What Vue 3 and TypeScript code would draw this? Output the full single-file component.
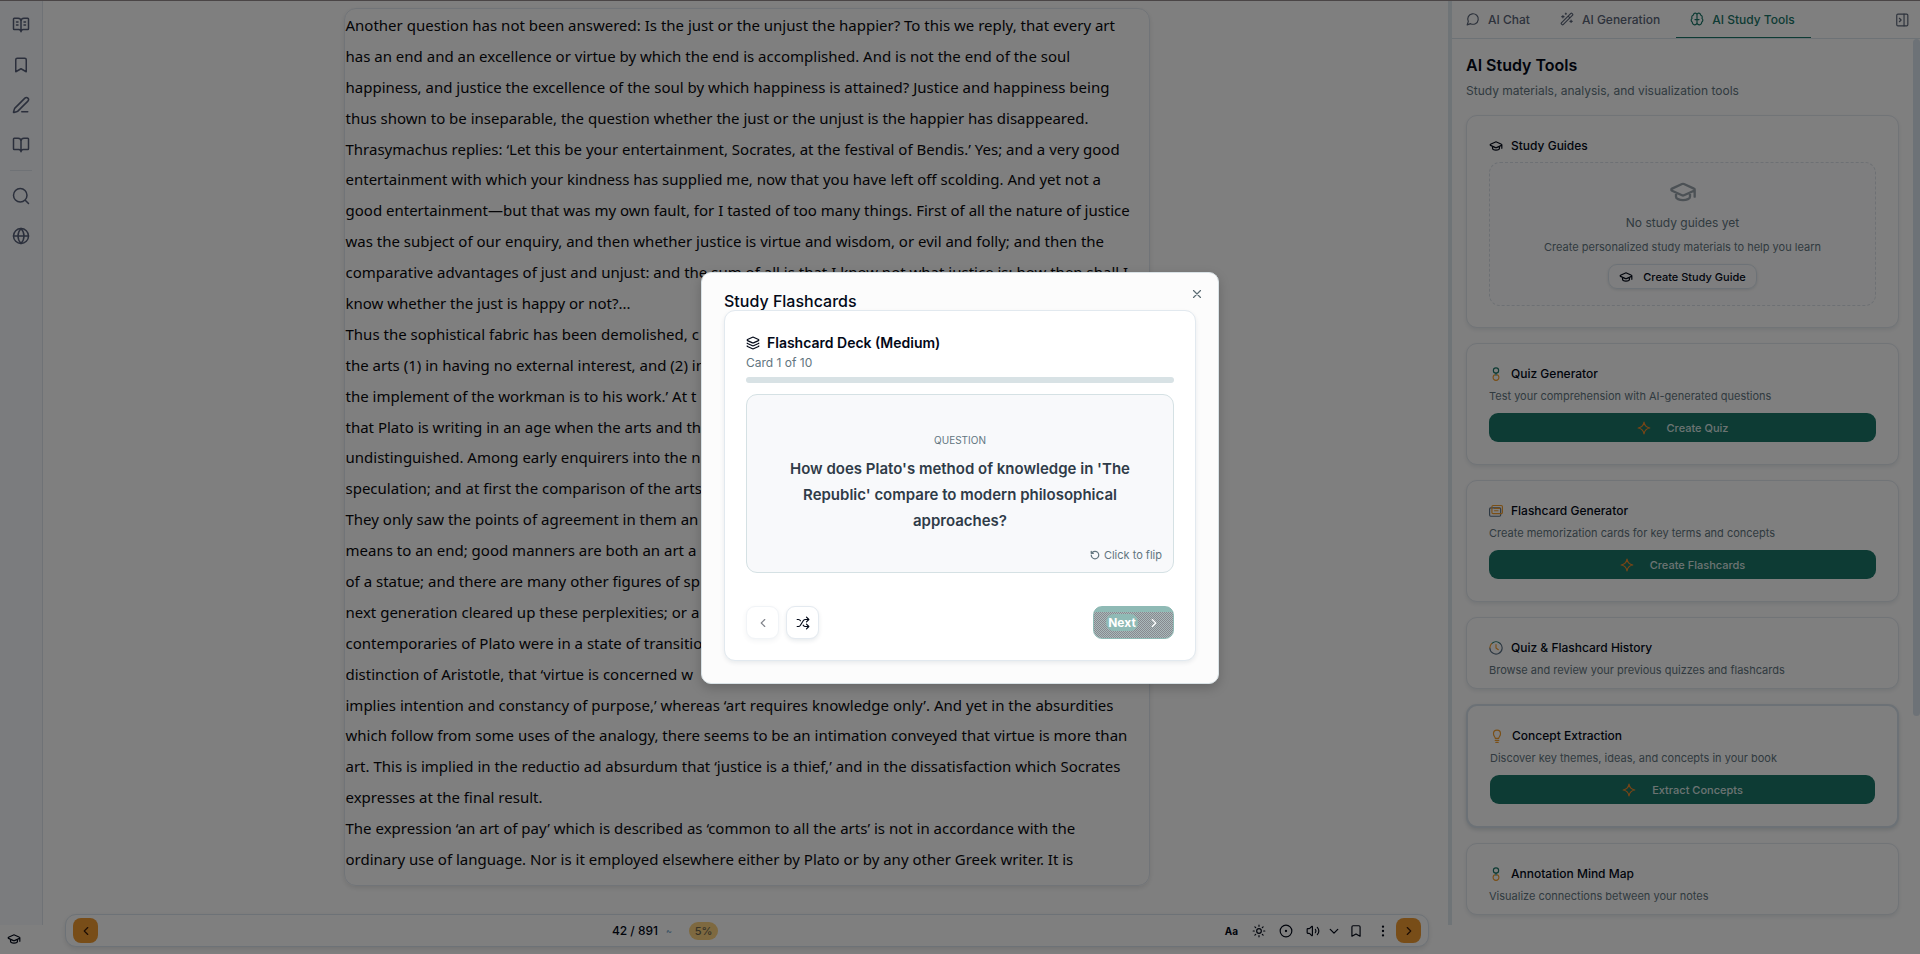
<script setup lang="ts">
import { ref } from 'vue'

const icons: Record<string, string> = {
  bookText: '<path d="M12 7v14M3 18a1 1 0 0 1-1-1V4a1 1 0 0 1 1-1h5a4 4 0 0 1 4 4 4 4 0 0 1 4-4h5a1 1 0 0 1 1 1v13a1 1 0 0 1-1 1h-6a3 3 0 0 0-3 3 3 3 0 0 0-3-3zM16 12h2M16 8h2M6 12h2M6 8h2"/>',
  bookmark: '<path d="m19 21-7-4-7 4V5a2 2 0 0 1 2-2h10a2 2 0 0 1 2 2z"/>',
  pen: '<path d="M13 21h8M21.174 6.812a1 1 0 0 0-3.986-3.987L3.842 16.174a2 2 0 0 0-.5.83l-1.321 4.352a.5.5 0 0 0 .623.622l4.353-1.32a2 2 0 0 0 .83-.497z"/>',
  book: '<path d="M12 7v14M3 18a1 1 0 0 1-1-1V4a1 1 0 0 1 1-1h5a4 4 0 0 1 4 4 4 4 0 0 1 4-4h5a1 1 0 0 1 1 1v13a1 1 0 0 1-1 1h-6a3 3 0 0 0-3 3 3 3 0 0 0-3-3z"/>',
  search: '<circle cx="11" cy="11" r="9"/><path d="m22 22-4-4"/>',
  globe: '<circle cx="12" cy="12" r="10"/><path d="M12 2a14.5 14.5 0 0 0 0 20 14.5 14.5 0 0 0 0-20M2 12h20"/>',
  cap: '<path d="M21.42 10.922a1 1 0 0 0-.019-1.838L12.83 5.18a2 2 0 0 0-1.66 0L2.6 9.08a1 1 0 0 0 0 1.832l8.57 3.908a2 2 0 0 0 1.66 0zM22 10v6M6 12.5V16a6 3 0 0 0 12 0v-3.5"/>',
  chat: '<path d="M7.9 20A9 9 0 1 0 4 16.1L2 22z"/>',
  wand: '<path d="m21.64 3.64-1.28-1.28a1.21 1.21 0 0 0-1.72 0L2.36 18.64a1.21 1.21 0 0 0 0 1.72l1.28 1.28a1.2 1.2 0 0 0 1.72 0L21.64 5.36a1.2 1.2 0 0 0 0-1.72M14 7l3 3M5 6v4M19 14v4M10 2v2M7 8H3M21 16h-4M11 3H9"/>',
  brain: '<path d="M12 5a3 3 0 1 0-5.997.125 4 4 0 0 0-2.526 5.77 4 4 0 0 0 .556 6.588A4 4 0 1 0 12 18ZM12 5a3 3 0 1 1 5.997.125 4 4 0 0 1 2.526 5.77 4 4 0 0 1-.556 6.588A4 4 0 1 1 12 18ZM8.500 13h7M12 5v13"/>',
  panel: '<rect x="3" y="2" width="19" height="20" rx="2"/><path d="M15.500 2v20M7.500 9l3 3-3 3"/>',
  sun: '<circle cx="12" cy="12" r="4"/><path d="M12 2v2M12 20v2M4.930 4.930l1.410 1.410M17.660 17.660l1.410 1.410M2 12h2M20 12h2M6.340 17.660l-1.410 1.410M19.070 4.930l-1.410 1.410"/>',
  target: '<circle cx="12" cy="12" r="10"/><circle cx="12" cy="12" r="1"/>',
  volume: '<path d="M11 4.702a.7.7 0 0 0-1.203-.498L6.413 7.587A1.400 1.400 0 0 1 5.416 8H3a1 1 0 0 0-1 1v6a1 1 0 0 0 1 1h2.416a1.400 1.400 0 0 1 .997.413l3.383 3.384A.7.7 0 0 0 11 19.298zM16 9a5 5 0 0 1 0 6M19.364 18.364a9 9 0 0 0 0-12.728"/>',
  down: '<path d="m3 8 9 9 9-9"/>',
  left: '<path d="m15 18-6-6 6-6"/>',
  right: '<path d="m9 18 6-6-6-6"/>',
  dots: '<circle cx="12" cy="12" r="1"/><circle cx="12" cy="4.500" r="1"/><circle cx="12" cy="19.500" r="1"/>',
  close: '<path d="M18 6 6 18M6 6l12 12"/>',
  layers: '<path d="M12.830 2.180a2 2 0 0 0-1.660 0L2.600 6.080a1 1 0 0 0 0 1.830l8.580 3.910a2 2 0 0 0 1.660 0l8.580-3.900a1 1 0 0 0 0-1.830zM2 12a1 1 0 0 0 .58.910l8.600 3.910a2 2 0 0 0 1.650 0l8.580-3.900A1 1 0 0 0 22 12M2 17a1 1 0 0 0 .58.910l8.600 3.910a2 2 0 0 0 1.650 0l8.580-3.900A1 1 0 0 0 22 17"/>',
  flip: '<path d="M3 12a9 9 0 1 0 9-9 9.750 9.750 0 0 0-6.740 2.740L3 8M3 3v5h5"/>',
  shuffle: '<path d="m18 14 4 4-4 4M18 2l4 4-4 4M2 18h1.973a4 4 0 0 0 3.300-1.700l5.454-8.600a4 4 0 0 1 3.300-1.700H22M2 6h1.972a4 4 0 0 1 3.600 2.200M22 18h-6.041a4 4 0 0 1-3.300-1.800l-.359-.450"/>',
  star: '<path d="M12 2c1 6 4 9 10 10-6 1-9 4-10 10-1-6-4-9-10-10 6-1 9-4 10-10z"/>',
  quiz: '<g stroke="#1a7668"><circle cx="12" cy="6" r="4.500"/><path d="M12 10.500V14"/></g><path stroke="#f59e2c" d="M9.500 13.500a5 5 0 1 0 5 0"/>',
  cards: '<rect stroke="#5b7186" x="1" y="6.500" width="19" height="14.500" rx="2"/><rect stroke="#f59e2c" x="5" y="2.500" width="18" height="14" rx="2"/><path stroke="#f59e2c" d="M9.500 7.500h9M9.500 11.500h6"/>',
  history: '<path stroke="#1a7668" d="M5 4a10.500 10.500 0 0 1 14 0"/><path stroke="#5b7186" d="M19 4a10.500 10.500 0 1 1-17.500 8"/><path stroke="#f59e2c" d="M1.500 11.500a10 10 0 0 1 3-7M12 6v6l4 3"/>',
  bulb: '<path d="M9 16c0-2-3-4-3-8a6 6 0 0 1 12 0c0 4-3 6-3 8zM9 19.500h6M10 23h4"/>',
}

const sideIcons = ['bookText', 'bookmark', 'pen', 'book']
const sideLabels = ['Contents', 'Bookmarks', 'Notes', 'Library']
const tabs = [
  { icon: 'chat', label: 'AI Chat' },
  { icon: 'wand', label: 'AI Generation' },
  { icon: 'brain', label: 'AI Study Tools' },
]
const activeTab = ref(2)

const tools = [
  { icon: 'quiz', title: 'Quiz Generator', text: 'Test your comprehension with AI-generated questions', action: 'Create Quiz' },
  { icon: 'cards', title: 'Flashcard Generator', text: 'Create memorization cards for key terms and concepts', action: 'Create Flashcards' },
  { icon: 'history', title: 'Quiz & Flashcard History', text: 'Browse and review your previous quizzes and flashcards' },
  { icon: 'bulb', title: 'Concept Extraction', text: 'Discover key themes, ideas, and concepts in your book', action: 'Extract Concepts', strong: true },
  { icon: 'quiz', title: 'Annotation Mind Map', text: 'Visualize connections between your notes' },
]

const paragraphs = [
  [
    'Another question has not been answered: Is the just or the unjust the happier? To this we reply, that every art',
    'has an end and an excellence or virtue by which the end is accomplished. And is not the end of the soul',
    'happiness, and justice the excellence of the soul by which happiness is attained? Justice and happiness being',
    'thus shown to be inseparable, the question whether the just or the unjust is the happier has disappeared.',
  ],
  [
    'Thrasymachus replies: ‘Let this be your entertainment, Socrates, at the festival of Bendis.’ Yes; and a very good',
    'entertainment with which your kindness has supplied me, now that you have left off scolding. And yet not a',
    'good entertainment—but that was my own fault, for I tasted of too many things. First of all the nature of justice',
    'was the subject of our enquiry, and then whether justice is virtue and wisdom, or evil and folly; and then the',
    'comparative advantages of just and unjust: and the sum of all is that I know not what justice is; how then shall I',
    'know whether the just is happy or not?...',
  ],
  [
    'Thus the sophistical fabric has been demolished, c',
    'the arts (1) in having no external interest, and (2) in',
    'the implement of the workman is to his work.’ At t',
    'that Plato is writing in an age when the arts and th',
    'undistinguished. Among early enquirers into the n',
    'speculation; and at first the comparison of the arts',
    'They only saw the points of agreement in them an',
    'means to an end; good manners are both an art a',
    'of a statue; and there are many other figures of sp',
    'next generation cleared up these perplexities; or a',
    'contemporaries of Plato were in a state of transitio',
    'distinction of Aristotle, that ‘virtue is concerned w',
    'implies intention and constancy of purpose,’ whereas ‘art requires knowledge only’. And yet in the absurdities',
    'which follow from some uses of the analogy, there seems to be an intimation conveyed that virtue is more than',
    'art. This is implied in the reductio ad absurdum that ‘justice is a thief,’ and in the dissatisfaction which Socrates',
    'expresses at the final result.',
  ],
  [
    'The expression ‘an art of pay’ which is described as ‘common to all the arts’ is not in accordance with the',
    'ordinary use of language. Nor is it employed elsewhere either by Plato or by any other Greek writer. It is',
  ],
]
</script>

<template>
  <div class="app">
    <div class="workspace">
      <nav class="rail" aria-label="Reader tools">
        <button v-for="(name, i) in sideIcons" :key="name" class="rail-btn" :aria-label="sideLabels[i]">
          <svg class="ico i18" viewBox="0 0 24 24" v-html="icons[name]" />
        </button>
        <span class="rail-sep" />
        <button class="rail-btn" aria-label="Search"><svg class="ico i18" viewBox="0 0 24 24" v-html="icons.search" /></button>
        <button class="rail-btn" aria-label="Web"><svg class="ico i18" viewBox="0 0 24 24" v-html="icons.globe" /></button>
      </nav>

      <main class="reader">
        <article class="sheet">
          <p v-for="(lines, i) in paragraphs" :key="i">
            <span v-for="line in lines" :key="line">{{ line }}</span>
          </p>
        </article>
      </main>

      <aside class="panel">
        <div class="tabs">
          <button v-for="(tab, i) in tabs" :key="tab.label" class="tab" :class="{ active: i === activeTab }" @click="activeTab = i">
            <svg class="ico i14" viewBox="0 0 24 24" v-html="icons[tab.icon]" />{{ tab.label }}
          </button>
          <button class="collapse" aria-label="Collapse panel"><svg class="ico i14" viewBox="0 0 24 24" v-html="icons.panel" /></button>
        </div>
        <div class="panel-body">
          <div class="tools">
            <h1>AI Study Tools</h1>
            <p class="lead">Study materials, analysis, and visualization tools</p>
            <section class="card guides">
              <h2><svg class="ico i14" viewBox="0 0 24 24" v-html="icons.cap" />Study Guides</h2>
              <div class="empty">
                <svg class="ico i28" viewBox="0 0 24 24" v-html="icons.cap" />
                <p class="empty-title">No study guides yet</p>
                <p class="small">Create personalized study materials to help you learn</p>
                <button class="outline"><svg class="ico i14" viewBox="0 0 24 24" v-html="icons.cap" />Create Study Guide</button>
              </div>
            </section>
            <section v-for="tool in tools" :key="tool.title" class="card" :class="{ strong: tool.strong, short: !tool.action }">
              <h2><svg class="ico i14" :class="tool.icon" viewBox="0 0 24 24" v-html="icons[tool.icon]" />{{ tool.title }}</h2>
              <p class="small">{{ tool.text }}</p>
              <button v-if="tool.action" class="primary">
                <svg class="ico i14" viewBox="0 0 24 24" v-html="icons.star" />{{ tool.action }}
              </button>
            </section>
          </div>
          <div class="scroll"><span /></div>
        </div>
      </aside>
    </div>

    <button class="corner" aria-label="Study"><svg class="ico i14" viewBox="0 0 24 24" v-html="icons.cap" /></button>

    <footer class="bar">
      <button class="turn" aria-label="Previous page"><svg class="ico i14" viewBox="0 0 24 24" v-html="icons.left" /></button>
      <div class="place"><span>42 / 891</span><i>~</i><b>5%</b></div>
      <div class="controls">
        <button class="aa">Aa</button>
        <button aria-label="Theme"><svg class="ico i14" viewBox="0 0 24 24" v-html="icons.sun" /></button>
        <button aria-label="Focus"><svg class="ico i14" viewBox="0 0 24 24" v-html="icons.target" /></button>
        <button aria-label="Read aloud"><svg class="ico i14" viewBox="0 0 24 24" v-html="icons.volume" /></button>
        <button class="narrow" aria-label="Voice options"><svg class="ico i10" viewBox="0 0 24 24" v-html="icons.down" /></button>
        <button aria-label="Bookmark"><svg class="ico i14" viewBox="0 0 24 24" v-html="icons.bookmark" /></button>
        <button aria-label="More"><svg class="ico i14" viewBox="0 0 24 24" v-html="icons.dots" /></button>
        <button class="turn" aria-label="Next page"><svg class="ico i14" viewBox="0 0 24 24" v-html="icons.right" /></button>
      </div>
    </footer>

    <div class="overlay">
      <div class="dialog" role="dialog" aria-modal="true" aria-labelledby="dialog-title">
        <h2 id="dialog-title">Study Flashcards</h2>
        <button class="close" aria-label="Close"><svg class="ico i14" viewBox="0 0 24 24" v-html="icons.close" /></button>
        <div class="deck">
          <h3><svg class="ico i14" viewBox="0 0 24 24" v-html="icons.layers" />Flashcard Deck (Medium)</h3>
          <p class="count">Card 1 of 10</p>
          <div class="progress" role="progressbar" aria-label="Deck progress" aria-valuenow="0" aria-valuemin="0" aria-valuemax="10" />
          <button class="flash">
            <span class="kind">QUESTION</span>
            <span class="question">How does Plato's method of knowledge in 'The Republic' compare to modern philosophical approaches?</span>
            <span class="flip"><svg class="ico i10" viewBox="0 0 24 24" v-html="icons.flip" />Click to flip</span>
          </button>
          <div class="actions">
            <button class="square" disabled aria-label="Previous card"><svg class="ico i14" viewBox="0 0 24 24" v-html="icons.left" /></button>
            <button class="square" aria-label="Shuffle"><svg class="ico i14" viewBox="0 0 24 24" v-html="icons.shuffle" /></button>
            <button class="next"><span>Next</span><svg class="ico i14" viewBox="0 0 24 24" v-html="icons.right" /></button>
          </div>
        </div>
      </div>
    </div>
  </div>
</template>

<style>
html, body { height: 100%; overflow: hidden; }
#app { height: 100%; }
</style>

<style scoped>
.app {
  height: 100vh;
  position: relative;
  overflow: hidden;
  background: #fff;
  color: #020817;
  font-family: Inter, "Liberation Sans", sans-serif;
  font-size: 12px;
}
* { box-sizing: border-box; }
h1, h2, h3, p { margin: 0; }
button { font: inherit; color: inherit; background: none; border: 0; padding: 0; display: flex; align-items: center; justify-content: center; }
.ico { fill: none; stroke: currentColor; stroke-width: 2; stroke-linecap: round; stroke-linejoin: round; flex: none; }
.i10 { width: 10px; height: 10px; stroke-width: 3; }
.i14 { width: 14px; height: 14px; }
.i18 { width: 18px; height: 18px; }
.i28 { width: 28px; height: 28px; }

.workspace { height: calc(100vh - 29px); display: flex; border-top: 1px solid #948a8c; }
.rail {
  width: 43px;
  flex: none;
  background: #f7f9fc;
  border-right: 1px solid #dfe5ec;
  display: flex;
  flex-direction: column;
  align-items: center;
  gap: 4px;
  padding-top: 6px;
  color: #565f78;
}
.rail-btn { width: 36px; height: 36px; }
.rail-sep { width: 22px; height: 1px; background: #dfe5ec; margin: 3px 0; }

.reader { flex: 1; min-width: 0; padding: 7px 14px 0 16px; display: flex; justify-content: center; align-items: flex-start; }
.sheet {
  width: 806px;
  border: 1px solid #e2e8f0;
  border-radius: 12px;
  padding: 1px 1px 10px;
  box-shadow: 0 2px 5px #0000001a;
  font-family: "Noto Sans", "Open Sans", sans-serif;
  font-size: 15px;
  line-height: 2.06;
  color: #08080c;
}
.sheet span { display: block; white-space: nowrap; }

.panel { width: 472px; flex: none; border-left: 4px solid #dfe9ef; display: flex; flex-direction: column; }
.tabs { display: flex; height: 38px; flex: none; border-bottom: 1px solid #dbe4ec; color: #5b6578; }
.tab { padding: 0 16px 0 14px; gap: 8px; font-weight: 500; border-bottom: 1px solid transparent; }
.tab.active { color: #1a7668; border-bottom-color: #1a7668; }
.collapse { margin-left: auto; padding: 0 11px; }
.panel-body { flex: 1; min-height: 0; display: flex; }
.tools { flex: 1; padding: 15px 14px 0; overflow: hidden; display: flex; flex-direction: column; }
.scroll { width: 7px; }
.scroll span { display: block; height: 677px; border-radius: 4px; background: #dbe5ee; }
.tools h1 { font-size: 16px; line-height: 22px; font-weight: 600; }
.lead { margin-top: 5px; line-height: 20px; color: #62757f; margin-bottom: 14px; }
.card {
  flex: none;
  border: 1px solid #e2e8ef;
  border-radius: 11px;
  background: #fff;
  padding: 22px;
  margin-bottom: 15px;
  box-shadow: 0 2px 4px #0f2a4018;
}
.card h2 { display: flex; align-items: center; gap: 8px; font-size: 12px; line-height: 16px; font-weight: 500; }
.guides { height: 213px; }
.small { font-size: 11px; line-height: 18px; color: #62757f; margin-top: 5px; }
.primary { width: 100%; height: 29px; margin-top: 8px; border-radius: 9px; background: #1a7668; color: #d9e6e4; font-size: 11px; font-weight: 500; gap: 16px; }
.primary .ico { color: #f08a2c; }
.short { padding-bottom: 9px; }
.strong { border: 2px solid #d8e3ec; box-shadow: 0 2px 4px #0f2a4028; }
.bulb { color: #f59e2c; }
.empty { margin-top: 8px; height: 144px; border: 1px dashed #dbe1e8; border-radius: 11px; background: #fdfdfe; text-align: center; display: flex; flex-direction: column; align-items: center; color: #62757f; padding-top: 15px; }
.empty .i28 { color: #98a2ab; }
.empty-title { margin-top: 7px; line-height: 20px; }
.outline { margin-top: 8px; width: 149px; height: 25px; gap: 10px; border: 1px solid #dbe5ee; border-radius: 9px; color: #020817; font-size: 11px; font-weight: 500; box-shadow: 0 1px 3px #0f2a4020; }

.corner { position: absolute; left: 7px; bottom: 8px; }
.bar {
  position: absolute;
  left: 65px;
  right: 491px;
  bottom: 7px;
  height: 33px;
  background: #fff;
  border: 1px solid #dbe5ee;
  border-radius: 11px;
  padding: 0 7px;
  display: flex;
  align-items: center;
  justify-content: space-between;
  box-shadow: 0 2px 5px #0000001a;
}
.turn { width: 25px; height: 25px; border-radius: 8px; background: #f09a30; color: #3a1a08; }
.place { display: flex; align-items: center; font-weight: 500; padding-left: 14px; }
.place i { font-style: normal; font-size: 9px; color: #6aa0c8; margin: 0 17px 0 8px; }
.place b { font-size: 11px; font-weight: 500; color: #6e664e; background: #fcd280; border-radius: 9px; width: 29px; height: 18px; line-height: 18px; text-align: center; }
.controls { display: flex; align-items: center; }
.controls button { width: 27px; height: 25px; }
.controls .aa { font-size: 10px; font-weight: 700; }
.controls .narrow { width: 16px; }
.controls .turn { width: 25px; }

.overlay { position: absolute; inset: 0; padding-top: 2px; background: #00000080; display: flex; align-items: center; justify-content: center; }
.dialog { position: relative; width: 518px; padding: 17px 22px 22px; background: #fcfcfc; border: 1px solid #d9e2e6; border-radius: 10px; box-shadow: 0 4px 12px #00000033; }
.dialog > h2 { font-size: 16px; line-height: 22px; font-weight: 500; margin-bottom: -2px; }
.close { position: absolute; top: 14px; right: 14px; color: #5a6b73; }
.deck { position: relative; background: #fff; border: 1px solid #e2e9ef; border-radius: 11px; padding: 21px; box-shadow: 0 2px 4px #0f2a4014; }
.deck h3 { display: flex; align-items: center; gap: 7px; font-size: 14px; line-height: 22px; font-weight: 600; }
.count { line-height: 18px; color: #62757f; }
.progress { height: 6px; margin: 5px 0 11px; border-radius: 3px; background: #d8e2e5; }
.flash { position: relative; flex-direction: column; width: 100%; height: 179px; border: 1px solid #d5e1e4; border-radius: 11px; background: #f8f9fb; padding: 0 24px; }
.kind { font-size: 10px; line-height: 14px; color: #62757f; margin-bottom: 9px; }
.question { font-size: 15px; line-height: 26px; font-weight: 600; color: #2f3b48; }
.flip { position: absolute; right: 11px; bottom: 10px; display: flex; align-items: center; gap: 4px; font-size: 11px; line-height: 14px; color: #62757f; }
.actions { display: flex; gap: 7px; margin-top: 33px; }
.square { width: 33px; height: 33px; border: 1px solid #e4eaf0; border-radius: 9px; background: #fff; box-shadow: 0 2px 4px #0f2a4018; }
.square:disabled { opacity: .5; }
.next {
  margin-left: auto;
  width: 81px;
  height: 33px;
  gap: 9px;
  border: 1px solid #8fbab5;
  border-radius: 9px;
  color: #fff;
  font-weight: 700;
  background: linear-gradient(#8fbab5 0 5px, transparent 5px), repeating-conic-gradient(#87898f 0 25%, #a9b9ba 0 50%) 0 0 / 2px 2px;
}
.next span { padding: 0 2px; line-height: 17px; border-radius: 8px; background: #8fbab5; }
</style>
